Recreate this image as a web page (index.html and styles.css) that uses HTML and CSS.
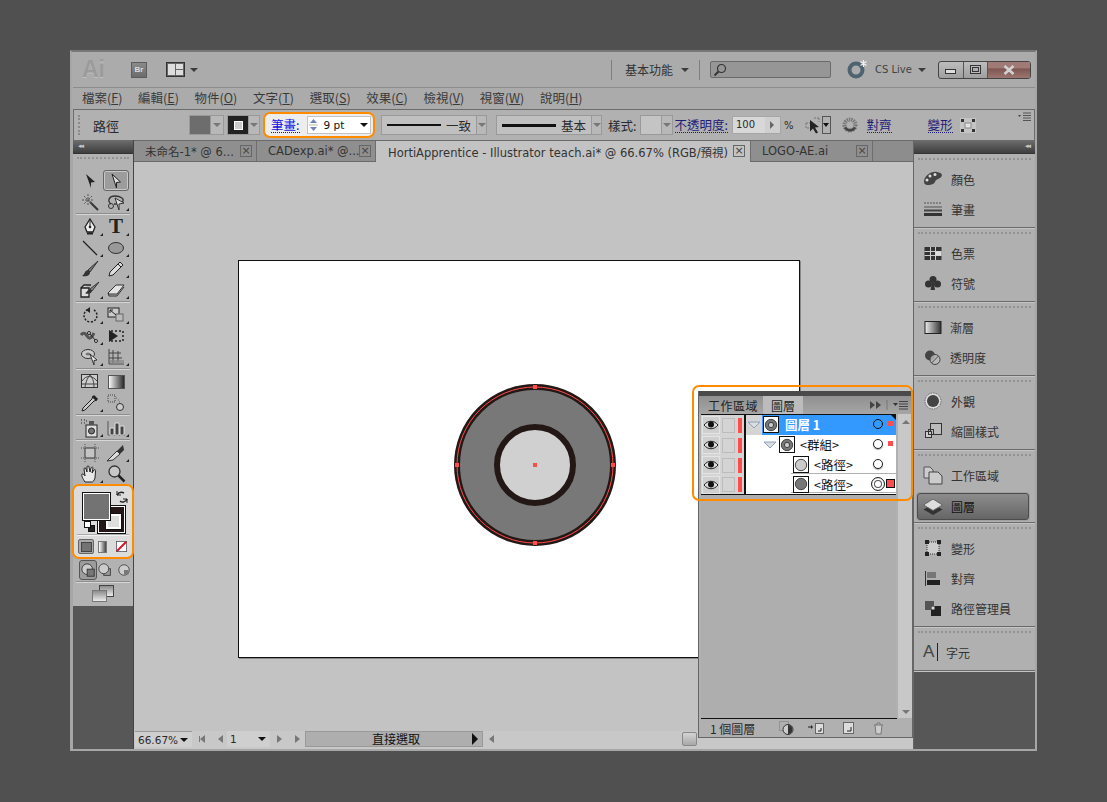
FILE: index.html
```html
<!DOCTYPE html>
<html lang="zh-Hant">
<head>
    <meta charset="UTF-8">
    <title>Adobe Illustrator</title>
    <link rel="stylesheet" href="styles.css">
</head>
<body>
<div class="window">
    <!-- Title bar -->
    <div class="titlebar">
        <span class="ai-logo">Ai</span>
        <span class="br-box">Br</span>
        <svg class="layout-icon" width="19" height="15" viewBox="0 0 19 15"><rect x=".5" y=".5" width="18" height="14" fill="#666" stroke="#333"/><rect x="2" y="2" width="7" height="11" fill="#ddd"/><rect x="10" y="2" width="7" height="5" fill="#ddd"/><rect x="10" y="8" width="7" height="5" fill="#ddd"/></svg>
        <span class="arrow-down dark layout-arrow"></span>
        <span class="bar-divider first"></span>
        <span class="workspace">基本功能</span>
        <span class="arrow-down dark workspace-arrow"></span>
        <span class="bar-divider second"></span>
        <span class="search">
            <svg width="14" height="14" viewBox="0 0 14 14" fill="none" stroke="#333" stroke-width="1.2"><circle cx="8.5" cy="5.5" r="4"/><path d="M5.5 8.5 1.5 12.5" stroke-width="1.8"/></svg>
        </span>
        <svg class="cs-icon" width="21" height="20" viewBox="0 0 21 20"><circle cx="9" cy="11" r="6.5" fill="none" stroke="#4d6470" stroke-width="4"/><path d="M16.5 1v7M13.5 2.5l6 4M19.5 2.5l-6 4" stroke="#f0f0f0" stroke-width="1.2"/></svg>
        <span class="cs-live">CS Live</span>
        <span class="arrow-down dark cs-arrow"></span>
        <div class="win-buttons">
            <span class="win-btn min"><i></i></span>
            <span class="win-btn max"><i></i></span>
            <span class="win-btn close">
                <svg width="12" height="10" viewBox="0 0 12 10"><path d="M1.5 1 10.5 9M10.5 1 1.5 9" stroke="#d2d2d2" stroke-width="2.6"/></svg>
            </span>
        </div>
    </div>

    <!-- Menu -->
    <nav class="menubar">
        <span>檔案(<u>F</u>)</span>
        <span>編輯(<u>E</u>)</span>
        <span>物件(<u>O</u>)</span>
        <span>文字(<u>T</u>)</span>
        <span>選取(<u>S</u>)</span>
        <span>效果(<u>C</u>)</span>
        <span>檢視(<u>V</u>)</span>
        <span>視窗(<u>W</u>)</span>
        <span>說明(<u>H</u>)</span>
    </nav>

    <!-- Control bar -->
    <div class="controlbar">
        <span class="grip-v"></span>
        <span class="path-label">路徑</span>
        <span class="swatch-combo fill-combo"><span class="swatch gray-swatch"></span><span class="combo-arrow"><i class="arrow-down"></i></span></span>
        <span class="swatch-combo stroke-combo"><span class="swatch black-swatch"><i></i></span><span class="combo-arrow"><i class="arrow-down"></i></span></span>
        <div class="stroke-highlight">
            <a class="link-blue">筆畫:</a>
            <span class="stroke-input">
                <span class="spinner">
                    <svg width="11" height="16" viewBox="0 0 11 16"><path d="M5.5 2 9 6H2z" fill="#6f83b8"/><path d="M2 10h7l-3.500 4z" fill="#6f83b8"/><path d="M1 8h9" stroke="#bbb"/></svg>
                </span>
                <span class="pt">9 pt</span>
                <i class="arrow-down black"></i>
            </span>
        </div>
        <span class="line-combo first-line"><span class="line thin"></span><span class="line-text">一致</span><span class="combo-arrow"><i class="arrow-down"></i></span></span>
        <span class="line-combo second-line"><span class="line thick"></span><span class="line-text">基本</span><span class="combo-arrow"><i class="arrow-down"></i></span></span>
        <span class="style-label">樣式:</span>
        <span class="style-combo"><span class="style-swatch"></span><span class="combo-arrow"><i class="arrow-down"></i></span></span>
        <a class="link-dark opacity-link">不透明度:</a>
        <span class="opacity-input"><span class="opacity-value">100</span><span class="opacity-step"><i class="arrow-right"></i></span></span>
        <span class="percent">%</span>
        <svg class="isolate-icon" width="17" height="18" viewBox="0 0 17 18"><path d="M1 7h4M9 2h5M1 7v5h4M14 2v4" stroke="#777" fill="none" stroke-dasharray="2 1"/><path d="M5 4l9 7-4 .5 3 5-2 1-3-5-3 3z" fill="#222"/></svg>
        <span class="isolate-arrow"><i class="arrow-down black"></i></span>
        <svg class="spinner-icon" width="16" height="16" viewBox="0 0 16 16"><circle cx="8" cy="8" r="5.500" fill="none" stroke="#777" stroke-width="4" stroke-dasharray="1.400 .8"/><path d="M2 11a7 7 0 0 0 12 0l-2-1a5 5 0 0 1-8 0z" fill="#444"/></svg>
        <a class="link-dark align-link">對齊</a>
        <a class="link-dark transform-link">變形</a>
        <svg class="transform-icon" width="16" height="15" viewBox="0 0 16 15"><rect width="16" height="15" fill="#c4c4c4"/><path d="M1 1h3v3H1zM12 1h3v3h-3zM1 11h3v3H1zM12 11h3v3h-3z" fill="#333"/><rect x="5" y="5" width="6" height="5" fill="#e2e2e2" stroke="#888"/></svg>
        <span class="panel-menu">
            <svg width="13" height="9" viewBox="0 0 13 9"><path d="M0 3h3L1.500 5z" fill="#444"/><path d="M5 1h8M5 3.500h8M5 6h8M5 8.500h8" stroke="#555"/></svg>
        </span>
    </div>

    <div class="main">
        <!-- Tools -->
        <aside class="tools">
            <div class="tools-panel">
            <div class="dark-head left-head"><span class="collapse">◂◂</span></div>
            <div class="grip-h"></div>
            <div class="tool-grid">
                <span class="tool"><svg width="16" height="16" viewBox="0 0 16 16"><path d="M4 1l9 8-4 .5 0 5.500z" fill="#222"/></svg></span>
                <span class="tool selected"><svg width="16" height="16" viewBox="0 0 16 16"><path d="M4 1l8.500 8-4 .5 0 5.500z" fill="#ddd" stroke="#222"/></svg></span>
                <span class="tool"><svg width="18" height="18" viewBox="0 0 18 18"><path d="M9 9l8 8" stroke="#333" stroke-width="2"/><path d="M7 1v11M1 7h12M3 3l8 8M11 3l-8 8" stroke="#555" stroke-dasharray="2 1"/></svg></span>
                <span class="tool more"><svg width="20" height="18" viewBox="0 0 20 18"><path d="M5 11C1 8 3 3 9 3s9 3 8 5-5 3-9 3" fill="none" stroke="#333" stroke-width="1.300"/><circle cx="5" cy="13" r="2.500" fill="none" stroke="#333"/><path d="M9 5l9 5-5 1v6z" fill="#ddd" stroke="#333"/></svg></span>
            </div>
            <div class="tool-sep"></div>
            <div class="tool-grid four">
                <span class="tool more"><svg width="16" height="18" viewBox="0 0 16 18"><path d="M8 1l5 8-2 5H5L3 9z" fill="#eee" stroke="#222" stroke-width="1.300"/><path d="M8 1v7" stroke="#222"/><circle cx="8" cy="9" r="1.300" fill="#222"/><path d="M5 15.500h6" stroke="#222" stroke-width="2"/></svg></span>
                <span class="tool more tool-t">T</span>
                <span class="tool more"><svg width="18" height="18" viewBox="0 0 18 18"><path d="M2 2l14 14" stroke="#222" stroke-width="1.300"/></svg></span>
                <span class="tool more"><svg width="18" height="16" viewBox="0 0 18 16"><ellipse cx="9" cy="8" rx="7.500" ry="5.500" fill="#999" stroke="#333"/></svg></span>
                <span class="tool"><svg width="18" height="18" viewBox="0 0 18 18"><path d="M17 1 7 10l2 2z" fill="#777" stroke="#333"/><path d="M7 10c-3 0-3 4-6 6 4 1 8 0 8-4z" fill="#333"/></svg></span>
                <span class="tool more"><svg width="18" height="18" viewBox="0 0 18 18"><path d="M13 2l3 3-10 10-4 1 1-4z" fill="#ddd" stroke="#222"/><path d="M11 4l3 3" stroke="#222"/></svg></span>
                <span class="tool more"><svg width="20" height="18" viewBox="0 0 20 18"><path d="M1 7h8v9H1z M1 7l3-3h7" fill="#ddd" stroke="#222" stroke-width="1.300"/><path d="M19 1 10 8l2 2z" fill="#888" stroke="#333"/><path d="M10 8c-3 0-2 3-5 4 3 2 7 0 7-2z" fill="#333"/></svg></span>
                <span class="tool more"><svg width="18" height="14" viewBox="0 0 18 14"><path d="M1 10 9 2h8l-7 9H2z" fill="#e4e4e4" stroke="#333"/><path d="M1 10l1 3h8l7-9" fill="none" stroke="#333"/></svg></span>
            </div>
            <div class="tool-sep"></div>
            <div class="tool-grid three">
                <span class="tool more"><svg width="18" height="18" viewBox="0 0 18 18"><path d="M13 4a6.500 6.500 0 1 1-7 0" fill="none" stroke="#222" stroke-width="1.500" stroke-dasharray="2 1.500"/><path d="M9 1 5 4l4 3z" fill="#222"/></svg></span>
                <span class="tool more"><svg width="18" height="18" viewBox="0 0 18 18"><rect x="1" y="2" width="11" height="9" fill="#ccc" stroke="#222"/><rect x="9" y="8" width="7" height="7" fill="#bbb" stroke="#666"/><path d="M3 4l6 5M3 4h3M3 4v3" stroke="#222" fill="none"/></svg></span>
                <span class="tool more"><svg width="20" height="18" viewBox="0 0 20 18"><path d="M1 8c4-5 6 2 8 3s4-3 5-5" fill="none" stroke="#555" stroke-width="3"/><path d="M9 6l8 9" stroke="#222"/><circle cx="9" cy="6" r="1.500" fill="#ddd" stroke="#222"/><circle cx="16" cy="14" r="1.500" fill="#ddd" stroke="#222"/></svg></span>
                <span class="tool"><svg width="18" height="16" viewBox="0 0 18 16"><rect x="4" y="3" width="12" height="10" fill="none" stroke="#222" stroke-width="1.500" stroke-dasharray="2 2"/><path d="M2 2l9 6-9 6z" fill="#222"/></svg></span>
                <span class="tool more"><svg width="20" height="18" viewBox="0 0 20 18"><ellipse cx="8" cy="6" rx="6.500" ry="4.500" fill="#ccc" stroke="#333"/><ellipse cx="8" cy="6" rx="2.500" ry="1.500" fill="#777"/><path d="M10 6l7 6-3 .5V17z" fill="#eee" stroke="#333"/></svg></span>
                <span class="tool more"><svg width="18" height="18" viewBox="0 0 18 18"><path d="M2 1v15h15M6 2v13M11 3v11M2 5h12M2 10h13" stroke="#444" fill="none"/><path d="M3 16h14v-4H3z" fill="#888" opacity=".7"/></svg></span>
            </div>
            <div class="tool-sep"></div>
            <div class="tool-grid two">
                <span class="tool"><svg width="18" height="15" viewBox="0 0 18 15"><rect x=".5" y=".5" width="16" height="13" fill="#ccc" stroke="#333"/><path d="M1 7c4-6 10-6 15 0M4 13c1-6 3-10 5-12M13 13c0-6-2-10-4-12M1 10h15" stroke="#444" fill="none"/></svg></span>
                <span class="tool"><svg width="17" height="14" viewBox="0 0 17 14"><defs><linearGradient id="gr1"><stop offset="0" stop-color="#fff"/><stop offset="1" stop-color="#222"/></linearGradient></defs><rect x=".5" y=".5" width="16" height="13" fill="url(#gr1)" stroke="#555"/></svg></span>
                <span class="tool more"><svg width="18" height="18" viewBox="0 0 18 18"><path d="M12 2l4 4-3 1-9 9-3 1 1-3 9-9z" fill="#ccc" stroke="#222"/><path d="M12 2l4 4" stroke="#222" stroke-width="3"/></svg></span>
                <span class="tool"><svg width="18" height="18" viewBox="0 0 18 18"><rect x="1" y="1" width="7" height="7" fill="none" stroke="#444" stroke-dasharray="1 1"/><circle cx="13" cy="13" r="3.500" fill="#ccc" stroke="#333"/><path d="M9 4h1M11 6h1M12 8h1" stroke="#666"/></svg></span>
            </div>
            <div class="tool-sep"></div>
            <div class="tool-grid one">
                <span class="tool more"><svg width="20" height="20" viewBox="0 0 20 20"><rect x="6" y="7" width="11" height="12" fill="#ddd" stroke="#222"/><circle cx="11.500" cy="13" r="3" fill="#777" stroke="#222"/><rect x="9" y="3" width="5" height="4" fill="#555"/><path d="M1 2h1M4 2h1M1 5h1M4 5h1M6 3h1" stroke="#222"/></svg></span>
                <span class="tool more"><svg width="19" height="16" viewBox="0 0 19 16"><path d="M1 15V1M1 15h17" stroke="#555"/><path d="M3 8h4v7H3zM8 3h4v12H8zM13 6h4v9h-4z" fill="#444" stroke="#ddd"/></svg></span>
            </div>
            <div class="tool-sep"></div>
            <div class="tool-grid two">
                <span class="tool"><svg width="20" height="20" viewBox="0 0 20 20"><rect x="5" y="5" width="10" height="10" fill="#c4c4c4" stroke="#333"/><path d="M5 1v3M15 1v3M5 16v3M15 16v3M1 5h3M1 15h3M16 5h3M16 15h3" stroke="#555" stroke-dasharray="1 1"/></svg></span>
                <span class="tool more"><svg width="20" height="18" viewBox="0 0 20 18"><path d="M1 17 11 7l3 3-7 6z" fill="#ddd" stroke="#333"/><path d="M11 7l6-6 1 5-4 4z" fill="#333"/></svg></span>
                <span class="tool more"><svg width="20" height="20" viewBox="0 0 20 20"><path d="M5 18C3 15 1 11 2 10s3 2 3 2L4 5c0-1.500 2-1.500 2 0l1 3 0-5c0-1.500 2-1.500 2 0l1 5 1-4c.5-1.500 2-1 2 0l-1 5 2-3c1-1 2 0 1.500 1L15 14c-1 3-2 4-3 4z" fill="#e8e8e8" stroke="#222"/></svg></span>
                <span class="tool"><svg width="19" height="19" viewBox="0 0 19 19"><circle cx="7.500" cy="7.500" r="5.500" fill="#c8c8c8" stroke="#333" stroke-width="1.300"/><path d="M11.500 11.500 17.500 17.500" stroke="#222" stroke-width="2.500"/></svg></span>
            </div>

            <div class="color-box">
                <div class="fill-stroke">
                    <span class="big-stroke"><i></i></span>
                    <span class="big-fill"></span>
                    <svg class="swap" width="14" height="14" viewBox="0 0 14 14" fill="none" stroke="#222" stroke-width="1.500"><path d="M2 5c2-3 5-3 7-2M12 9c-1 3-5 4-7 2"/><path d="M2 1v4h4M12 13V9H8" stroke-width="1"/></svg>
                    <span class="mini-fill"></span>
                    <span class="mini-stroke"><i></i></span>
                </div>
                <div class="color-sep"></div>
                <div class="color-modes">
                    <span class="mode active"><i></i></span>
                    <span class="mode grad"></span>
                    <svg class="mode-none" width="11" height="11" viewBox="0 0 14 14"><rect x=".5" y=".5" width="13" height="13" fill="#fff" stroke="#555"/><path d="M1 13 13 1" stroke="#d8142c" stroke-width="2.500"/></svg>
                </div>
            </div>
            <div class="draw-modes">
                <span class="draw-mode active"><svg width="15" height="15" viewBox="0 0 17 17"><circle cx="7" cy="7" r="6" fill="#ccc" stroke="#333"/><rect x="7" y="7" width="8" height="8" fill="#777" stroke="#333"/></svg></span>
                <span class="draw-mode"><svg width="14" height="14" viewBox="0 0 17 17"><rect x="7" y="7" width="8" height="8" fill="#999" stroke="#333"/><circle cx="7" cy="7" r="6" fill="#ccc" stroke="#333"/></svg></span>
                <span class="draw-mode last"><svg width="12" height="12" viewBox="0 0 16 16"><circle cx="8" cy="8" r="7" fill="#ccc" stroke="#333"/><rect x="8" y="8" width="6" height="6" fill="#777"/></svg></span>
            </div>
            <div class="tool-sep"></div>
            <div class="screen-mode">
                <svg width="22" height="17" viewBox="0 0 22 17"><defs><linearGradient id="gr2" x1="0" y1="0" x2="0" y2="1"><stop offset="0" stop-color="#888"/><stop offset="1" stop-color="#f0f0f0"/></linearGradient></defs><rect x="7.500" y=".5" width="14" height="11" fill="url(#gr2)" stroke="#444"/><rect x=".5" y="5.500" width="14" height="11" fill="url(#gr2)" stroke="#777"/></svg>
            </div>
            </div>
        </aside>

        <!-- Document area -->
        <section class="doc">
            <div class="tabs">
                <span class="tab tab-1"><b>未命名-1* @ 6...</b><i class="tab-x">×</i></span>
                <span class="tab tab-2"><b>CADexp.ai* @...</b><i class="tab-x">×</i></span>
                <span class="tab tab-active"><b>HortiApprentice - Illustrator teach.ai* @ 66.67% (RGB/預視)</b><i class="tab-x">×</i></span>
                <span class="tab tab-4"><b>LOGO-AE.ai</b><i class="tab-x">×</i></span>
            </div>
            <div class="canvas">
                <div class="artboard">
                    <svg class="art" width="170" height="170" viewBox="0 0 170 170">
                        <circle cx="85" cy="85" r="78" fill="#787878" stroke="#231815" stroke-width="6"/>
                        <circle cx="85" cy="85" r="38" fill="#d0d0d0" stroke="#231815" stroke-width="6"/>
                        <circle cx="85" cy="85" r="78" fill="none" stroke="#ff4d4d"/>
                        <rect x="83" y="5" width="4" height="4" fill="#ff4d4d"/>
                        <rect x="83" y="161" width="4" height="4" fill="#ff4d4d"/>
                        <rect x="5" y="83" width="4" height="4" fill="#ff4d4d"/>
                        <rect x="161" y="83" width="4" height="4" fill="#ff4d4d"/>
                        <rect x="83" y="83" width="4" height="4" fill="#ff4d4d"/>
                    </svg>
                </div>

                <!-- Floating layers panel -->
                <div class="layers-panel">
                    <div class="panel-top"></div>
                    <div class="panel-tabs">
                        <span class="ptab">工作區域</span>
                        <span class="ptab on">圖層</span>
                        <span class="ptab-tools">
                            <svg width="40" height="10" viewBox="0 0 40 10"><path d="M0 1l5 4-5 4zM6 1l5 4-5 4z" fill="#444"/><path d="M17 0v10" stroke="#777"/><path d="M23 3h5l-2.500 3z" fill="#333"/><path d="M29 1.500h9M29 4h9M29 6.500h9M29 9h9" stroke="#444"/></svg>
                        </span>
                    </div>
                    <div class="layer-list">
                        <div class="layer-rows">
                            <div class="layer-row top">
                                <div class="vis"><span class="eye"><svg width="16" height="12" viewBox="0 0 16 12"><path d="M1 6c4-5 10-5 14 0-4 5-10 5-14 0z" fill="#ddd" stroke="#222"/><circle cx="8" cy="5.500" r="3" fill="#111"/></svg></span><span class="lock"></span><span class="red-tag"></span></div>
                                <div class="twist"><svg width="14" height="8" viewBox="0 0 14 8"><path d="M1 1h12L7 7z" fill="#ddd" stroke="#8aa0c0"/></svg></div>
                                <div class="row-main selected">
                                    <span class="thumb"><svg width="16" height="16" viewBox="0 0 16 16"><circle cx="8" cy="8" r="6.500" fill="#777" stroke="#333"/><circle cx="8" cy="8" r="3" fill="#ccc" stroke="#333"/></svg></span>
                                    <span class="layer-name strong">圖層 1</span>
                                    <span class="target blue"></span>
                                    <span class="mark"></span>
                                </div>
                            </div>
                            <div class="layer-row">
                                <div class="vis"><span class="eye"><svg width="16" height="12" viewBox="0 0 16 12"><path d="M1 6c4-5 10-5 14 0-4 5-10 5-14 0z" fill="#ddd" stroke="#222"/><circle cx="8" cy="5.500" r="3" fill="#111"/></svg></span><span class="lock"></span><span class="red-tag"></span></div>
                                <div class="row-main level-1">
                                    <svg class="twist-in" width="14" height="8" viewBox="0 0 14 8"><path d="M1 1h12L7 7z" fill="#ddd" stroke="#8aa0c0"/></svg>
                                    <span class="thumb"><svg width="16" height="16" viewBox="0 0 16 16"><circle cx="8" cy="8" r="6.500" fill="#777" stroke="#333"/><circle cx="8" cy="8" r="3" fill="#ccc" stroke="#333"/></svg></span>
                                    <span class="layer-name">&lt;群組&gt;</span>
                                    <span class="target"></span>
                                    <span class="mark"></span>
                                </div>
                            </div>
                            <div class="layer-row">
                                <div class="vis"><span class="eye"><svg width="16" height="12" viewBox="0 0 16 12"><path d="M1 6c4-5 10-5 14 0-4 5-10 5-14 0z" fill="#ddd" stroke="#222"/><circle cx="8" cy="5.500" r="3" fill="#111"/></svg></span><span class="lock"></span><span class="red-tag"></span></div>
                                <div class="row-main level-2">
                                    <span class="thumb"><svg width="16" height="16" viewBox="0 0 16 16"><circle cx="8" cy="8" r="6.500" fill="#ccc" stroke="#333"/></svg></span>
                                    <span class="layer-name">&lt;路徑&gt;</span>
                                    <span class="target"></span>
                                    <span class="mark none"></span>
                                </div>
                            </div>
                            <div class="layer-row last">
                                <div class="vis"><span class="eye"><svg width="16" height="12" viewBox="0 0 16 12"><path d="M1 6c4-5 10-5 14 0-4 5-10 5-14 0z" fill="#ddd" stroke="#222"/><circle cx="8" cy="5.500" r="3" fill="#111"/></svg></span><span class="lock"></span><span class="red-tag"></span></div>
                                <div class="row-main level-2">
                                    <span class="thumb"><svg width="16" height="16" viewBox="0 0 16 16"><circle cx="8" cy="8" r="6.500" fill="#777" stroke="#333"/></svg></span>
                                    <span class="layer-name">&lt;路徑&gt;</span>
                                    <span class="target double"></span>
                                    <span class="mark big"></span>
                                </div>
                            </div>
                            <div class="layer-empty"></div>
                        </div>
                        <div class="layer-scroll">
                            <i class="scroll-up"></i>
                            <i class="scroll-down"></i>
                        </div>
                    </div>
                    <div class="layer-foot">
                        <span class="layer-count">1 個圖層</span>
                        <svg width="15" height="14" viewBox="0 0 15 14"><rect x=".5" y=".5" width="9" height="9" fill="none" stroke="#777" stroke-dasharray="1 1"/><circle cx="9" cy="8.500" r="5" fill="#ccc" stroke="#333"/><path d="M9 8.500V4a4.500 4.500 0 0 1 0 9z" fill="#333"/></svg>
                        <svg width="16" height="11" viewBox="0 0 16 11"><path d="M0 4h4" stroke="#222"/><path d="M3 2l2 2-2 2z" fill="#222"/><rect x="7.500" y=".5" width="8" height="10" fill="#ddd" stroke="#666"/><path d="M10 8h3V5" stroke="#222" fill="none"/></svg>
                        <svg class="foot-gap" width="11" height="12" viewBox="0 0 11 12"><rect x=".5" y=".5" width="10" height="11" fill="#ddd" stroke="#666"/><path d="M4 9h4V5" stroke="#222" fill="none"/></svg>
                        <svg class="foot-gap" width="11" height="13" viewBox="0 0 11 13"><path d="M1 3h9M2 3l1 9h5l1-9M4 3V1h3v2" fill="#ccc" stroke="#777"/></svg>
                    </div>
                </div>
                <div class="layers-highlight"></div>
            </div>
            <div class="statusbar">
                <span class="zoom-combo">66.67%<i class="arrow-down black"></i></span>
                <span class="nav-btns"><i class="first-page"></i><i class="prev-page"></i></span>
                <span class="page-combo">1<i class="arrow-down black"></i></span>
                <span class="nav-btns after"><i class="next-page"></i><i class="last-page"></i></span>
                <span class="status-text">直接選取<i class="arrow-right black"></i></span>
                <span class="h-scroll"><i class="prev-page"></i><span class="thumb-h"></span></span>
            </div>
        </section>

        <!-- Right dock -->
        <aside class="dock">
            <div class="dark-head right-head"><span class="collapse">◂◂</span></div>
            <div class="dock-group">
                <div class="dock-item"><svg width="20" height="16" viewBox="0 0 20 16"><path d="M1 11C1 5 8 0 14 1s6 4 3 6-4 1-5 4-11 5-11 0z" fill="#444"/><circle cx="7" cy="5" r="1.500" fill="#ddd"/><circle cx="12" cy="3.500" r="1.500" fill="#ddd"/><circle cx="4" cy="9" r="1.500" fill="#ddd"/></svg><span>顏色</span></div>
                <div class="dock-item"><svg width="18" height="14" viewBox="0 0 18 14"><path d="M0 1h18" stroke="#555" stroke-dasharray="2 1"/><path d="M0 5h18" stroke="#555"/><path d="M0 8.500h18" stroke="#444" stroke-width="2"/><path d="M0 12.500h18" stroke="#333" stroke-width="3"/></svg><span>筆畫</span></div>
            </div>
            <div class="dock-group">
                <div class="dock-item"><svg width="17" height="13" viewBox="0 0 17 13"><rect width="17" height="13" fill="#333"/><path d="M6 0v13M11 0v13M0 4.500h17M0 8.500h17" stroke="#ccc"/><rect x="11" y="4.500" width="6" height="4" fill="#ddd"/></svg><span>色票</span></div>
                <div class="dock-item"><svg width="16" height="16" viewBox="0 0 16 16"><circle cx="8" cy="4.500" r="3.500" fill="#333"/><circle cx="3.500" cy="9" r="3.500" fill="#333"/><circle cx="12.500" cy="9" r="3.500" fill="#333"/><path d="M7 8h2l1 7H5.500z" fill="#333"/></svg><span>符號</span></div>
            </div>
            <div class="dock-group">
                <div class="dock-item"><svg width="17" height="13" viewBox="0 0 17 13"><defs><linearGradient id="gr3"><stop offset="0" stop-color="#eee"/><stop offset="1" stop-color="#333"/></linearGradient></defs><rect x=".5" y=".5" width="16" height="12" fill="url(#gr3)" stroke="#222"/></svg><span class="tight">漸層</span></div>
                <div class="dock-item"><svg width="17" height="15" viewBox="0 0 17 15"><circle cx="5.500" cy="5.500" r="5" fill="#444"/><circle cx="10.500" cy="9.500" r="5" fill="#bbb" fill-opacity=".8" stroke="#444"/><path d="M7 13 14 6" stroke="#444"/></svg><span class="tight">透明度</span></div>
            </div>
            <div class="dock-group">
                <div class="dock-item"><svg width="18" height="18" viewBox="0 0 18 18"><circle cx="9" cy="9" r="8" fill="#ddd" stroke="#666" stroke-dasharray="1.500 1"/><circle cx="9" cy="9" r="6" fill="#444"/></svg><span>外觀</span></div>
                <div class="dock-item"><svg width="18" height="16" viewBox="0 0 18 16"><rect x="6.500" y=".5" width="11" height="11" fill="#bbb" stroke="#333"/><rect x="1.500" y="8.500" width="6" height="6" fill="#ccc" stroke="#333"/><rect x="4.500" y="6.500" width="5" height="5" fill="none" stroke="#333"/></svg><span>縮圖樣式</span></div>
            </div>
            <div class="dock-group">
                <div class="dock-item"><svg width="20" height="19" viewBox="0 0 20 19"><path d="M1 1h6l3 3v8H1z" fill="#ccc" stroke="#555"/><path d="M6 6h9l4 4v8H6z" fill="#ccc" stroke="#444"/></svg><span>工作區域</span></div>
                <div class="dock-item active"><svg width="19" height="16" viewBox="0 0 19 16"><path d="M9.500 5 19 10.500 9.500 16 0 10.500z" fill="#333"/><path d="M9.500 0 19 6 9.500 11.500 0 6z" fill="#ddd" stroke="#666"/></svg><span>圖層</span></div>
            </div>
            <div class="dock-group">
                <div class="dock-item"><svg width="16" height="16" viewBox="0 0 16 16"><rect x="2" y="2" width="12" height="12" fill="#ccc" stroke="#333" stroke-dasharray="1 1"/><path d="M0 0h4v4H0zM12 0h4v4h-4zM0 12h4v4H0zM12 12h4v4h-4z" fill="#222"/></svg><span>變形</span></div>
                <div class="dock-item"><svg width="16" height="15" viewBox="0 0 16 15"><path d="M.5 0v15" stroke="#333"/><rect x="2" y="1" width="9" height="6" fill="#777"/><rect x="2" y="9" width="13" height="5" fill="#222"/></svg><span>對齊</span></div>
                <div class="dock-item"><svg width="16" height="15" viewBox="0 0 16 15"><rect width="9" height="9" fill="#555"/><rect x="6" y="5" width="10" height="10" fill="#222"/><rect x="6.500" y="5.500" width="3" height="3" fill="#ddd"/></svg><span>路徑管理員</span></div>
            </div>
            <div class="dock-group">
                <div class="dock-item"><span class="char-a">A</span><span class="char-bar"></span><span>字元</span></div>
            </div>
            <div class="dock-rest"></div>
        </aside>
    </div>
</div>
</body>
</html>
```

FILE: styles.css
```css
:root {
    --panel: #b0b0b0;
    --canvas: #c3c3c3;
    --line: #7c7c7c;
    --orange: #ff8c00;
    --red: #ff4d4d;
}

* {
    box-sizing: border-box;
}

body {
    margin: 0;
    height: 802px;
    padding: 50px 0 0 70px;
    background-color: #505050;
    font-family: "Noto Sans CJK TC", "DejaVu Sans", sans-serif;
    font-size: 12px;
    color: #2a2a2a;
    overflow: hidden;
}

i {
    font-style: normal;
}

.window {
    width: 967px;
    height: 701px;
    background-color: #ababab;
    border: 2px solid #a6a6a6;
    border-top-color: #777;
    display: flex;
    flex-direction: column;
}

/* small triangles used all over */
.arrow-down {
    display: inline-block;
    width: 0;
    height: 0;
    border-left: 4px solid transparent;
    border-right: 4px solid transparent;
    border-top: 4px solid #777;
}

.arrow-down.dark {
    border-top-color: #3c3c3c;
}

.arrow-down.black {
    border-top-color: #111;
}

.arrow-right {
    display: inline-block;
    width: 0;
    height: 0;
    border-top: 4px solid transparent;
    border-bottom: 4px solid transparent;
    border-left: 4px solid #666;
}

.arrow-right.black {
    border-top-width: 6px;
    border-bottom-width: 6px;
    border-left: 6px solid #111;
}

/* title bar */
.titlebar {
    height: 35px;
    display: flex;
    align-items: center;
    flex-shrink: 0;
}

.ai-logo {
    margin-left: 10px;
    width: 22px;
    font-family: "Liberation Sans", sans-serif;
    font-weight: bold;
    font-size: 23px;
    color: #9b9b9b;
    text-shadow: 0 1px 0 #c0c0c0;
}

.br-box {
    margin-left: 27px;
    width: 16px;
    height: 16px;
    background: linear-gradient(#8a8a8a, #6c6c6c);
    border: 1px solid #5c5c5c;
    color: #ddd;
    font: bold 8px "Liberation Sans", sans-serif;
    line-height: 14px;
    text-align: center;
}

.layout-icon {
    margin-left: 19px;
}

.layout-arrow {
    margin-left: 5px;
}

.bar-divider {
    width: 1px;
    height: 20px;
    background-color: #7f7f7f;
}

.bar-divider.first {
    margin-left: 413px;
}

.bar-divider.second {
    margin-left: 10px;
}

.workspace {
    margin-left: 13px;
    font-size: 12px;
    color: #333;
    white-space: nowrap;
    flex-shrink: 0;
}

.workspace-arrow {
    margin-left: 8px;
}

.search {
    margin-left: 10px;
    width: 121px;
    height: 17px;
    background-color: #969696;
    border: 1px solid #6a6a6a;
    border-radius: 2px;
    padding-left: 2px;
    display: flex;
    align-items: center;
}

.cs-icon {
    margin-left: 16px;
    margin-top: -2px;
}

.cs-live {
    margin-left: 7px;
    font: 10px "DejaVu Sans", sans-serif;
    color: #444;
    white-space: nowrap;
}

.cs-arrow {
    margin-left: 6px;
}

.win-buttons {
    margin-left: 12px;
    width: 93px;
    height: 18px;
    border: 1px solid #444;
    border-radius: 3px;
    overflow: hidden;
    display: flex;
    flex-shrink: 0;
    background: linear-gradient(#bdbdbd, #9f9f9f);
}

.win-btn {
    height: 100%;
    display: flex;
    align-items: center;
    justify-content: center;
    border-right: 1px solid #555;
}

.win-btn.min {
    width: 25px;
}

.win-btn.min i {
    width: 11px;
    height: 5px;
    margin-top: 4px;
    border: 1px solid #333;
    background-color: #ddd;
}

.win-btn.max {
    width: 24px;
}

.win-btn.max i {
    width: 11px;
    height: 9px;
    border: 1px solid #333;
    box-shadow: inset 0 0 0 1px #bbb, inset 0 0 0 2px #333;
}

.win-btn.close {
    flex: 1;
    border-right: none;
    background: linear-gradient(#a07a76 0, #a07a76 40%, #7e5450 41%, #9c7672);
}

/* menu */
.menubar {
    height: 22px;
    margin-left: 1px;
    border-top: 1px solid #8c8c8c;
    padding: 0 0 3px 9px;
    display: flex;
    align-items: center;
    gap: 15.700px;
    flex-shrink: 0;
    font-size: 12.500px;
    color: #3a3a3a;
}

/* control bar */
.controlbar {
    height: 31px;
    margin-left: 1px;
    border: 1px solid #6c6c6c;
    border-bottom: none;
    background-color: #b1b1b1;
    display: flex;
    align-items: center;
    flex-shrink: 0;
    position: relative;
}

.grip-v {
    width: 3px;
    height: 20px;
    margin-left: 4px;
    border-left: 2px dotted #8a8a8a;
}

.path-label {
    margin-left: 12px;
    font-size: 13px;
}

.swatch-combo {
    display: flex;
    height: 20px;
    border: 1px solid #999;
}

.fill-combo {
    margin-left: 70px;
    width: 35px;
}

.stroke-combo {
    margin-left: 3px;
    width: 33px;
}

.swatch {
    width: 20px;
    height: 100%;
    display: flex;
    align-items: center;
    justify-content: center;
}

.gray-swatch {
    background-color: #6d6d6d;
}

.black-swatch {
    background-color: #222;
}

.black-swatch i {
    width: 9px;
    height: 9px;
    background-color: #ccc;
    border: 1px solid #fff;
}

.combo-arrow {
    flex: 1;
    display: flex;
    align-items: center;
    justify-content: center;
    background-color: #b8b8b8;
    border-left: 1px solid #999;
}

.stroke-highlight {
    margin-left: 3px;
    width: 112px;
    height: 26px;
    border: 2px solid var(--orange);
    border-radius: 7px;
    background-color: #ededed;
    display: flex;
    align-items: center;
    padding-left: 6px;
}

.link-blue {
    color: #1010e0;
    font-size: 12.500px;
    border-bottom: 1px dotted #1010e0;
    line-height: 14px;
}

.stroke-input {
    margin-left: 7px;
    width: 64px;
    height: 18px;
    background-color: #fff;
    border: 1px solid #c4c4c4;
    display: flex;
    align-items: center;
}

.spinner {
    display: flex;
}

.pt {
    margin-left: 5px;
    font: 10.500px "DejaVu Sans", sans-serif;
    color: #111;
    width: 36px;
}

.line-combo {
    height: 20px;
    display: flex;
    align-items: center;
    border: 1px solid #999;
    background-color: #c0c0c0;
}

.first-line {
    margin-left: 6px;
    width: 106px;
}

.second-line {
    margin-left: 9px;
    width: 106px;
}

.line {
    width: 54px;
    margin-left: 5px;
    background-color: #111;
}

.line.thin {
    height: 2px;
}

.line.thick {
    height: 3px;
}

.line-text {
    margin-left: 5px;
    width: 30px;
    font-size: 12.500px;
}

.combo-arrow,
.line-combo .combo-arrow {
    align-self: stretch;
}

.style-label {
    margin-left: 6px;
    font-size: 12.500px;
}

.style-combo {
    margin-left: 3px;
    width: 33px;
    height: 20px;
    display: flex;
    border: 1px solid #999;
}

.style-swatch {
    width: 20px;
    background-color: #c4c4c4;
}

.link-dark {
    color: #1c1c78;
    font-size: 12.500px;
    line-height: 14px;
    border-bottom: 1px dotted #1c1c78;
}

.opacity-link {
    margin-left: 2px;
}

.opacity-input {
    margin-left: 4px;
    width: 49px;
    height: 18px;
    display: flex;
    background-color: #cfcfcf;
    border: 1px solid #a6a6a6;
}

.opacity-value {
    width: 32px;
    padding-left: 3px;
    font: 10px/16px "DejaVu Sans", sans-serif;
    background-color: #d8d8d8;
}

.opacity-step {
    flex: 1;
    display: flex;
    align-items: center;
    justify-content: center;
}

.percent {
    margin-left: 3px;
    font: 10px "DejaVu Sans", sans-serif;
}

.isolate-icon {
    margin-left: 11px;
}

.isolate-arrow {
    width: 9px;
    height: 18px;
    border: 1px solid #555;
    display: flex;
    align-items: center;
    justify-content: center;
}

.isolate-arrow .arrow-down {
    border-left-width: 3px;
    border-right-width: 3px;
    flex-shrink: 0;
}

.spinner-icon {
    margin-left: 11px;
}

.align-link {
    margin-left: 9px;
}

.transform-link {
    margin-left: 36px;
}

.transform-icon {
    margin-left: 7px;
}

.panel-menu {
    position: absolute;
    right: 3px;
    top: 2px;
    display: flex;
}

/* main area */
.main {
    flex: 1;
    display: flex;
    min-height: 0;
}

.dark-head {
    height: 14px;
    background: linear-gradient(#6e6e6e, #3e3e3e);
    border-bottom: 1px solid #333;
    color: #c8c8c8;
    font: 7px/12px "DejaVu Sans", sans-serif;
    letter-spacing: -1px;
    padding: 0 5px;
}

.right-head {
    text-align: right;
}

/* tools */
.tools {
    width: 62px;
    flex-shrink: 0;
    background-color: #575757;
    border-left: 1px solid #a6a6a6;
    border-right: 1px solid #444;
}

.tools-panel {
    height: 466px;
    background-color: #b2b2b2;
}

.grip-h {
    height: 3px;
    margin: 3px 4px 10px;
    border-top: 2px dotted #939393;
}

.tool-grid {
    padding-left: 4px;
    display: grid;
    grid-template-columns: 26px 26px;
    grid-auto-rows: 21px;
}

.tool {
    position: relative;
    display: flex;
    align-items: center;
    justify-content: center;
}

.tool.more::after {
    content: "";
    position: absolute;
    right: 0;
    bottom: 1px;
    border-left: 3px solid transparent;
    border-bottom: 3px solid #222;
}

.tool.selected {
    background-color: #9c9c9c;
    border: 1px solid #666;
    border-radius: 3px;
    box-shadow: inset 0 0 0 1px #c8c8c8;
}

.tool-t {
    font: bold 21px "Liberation Serif", serif;
    color: #222;
}

.tool-sep {
    height: 1px;
    margin: 1px 3px 1px;
    background-color: #d6d6d6;
    border-top: 1px solid #8e8e8e;
    box-sizing: content-box;
}

/* fill / stroke box */
.color-box {
    width: 62px;
    height: 75px;
    margin: 0 0 0 -1px;
    background-color: #dcdcdc;
    border: 2px solid var(--orange);
    border-radius: 7px;
    padding: 6px 0 0;
    position: relative;
}

.fill-stroke {
    height: 42px;
    position: relative;
}

.big-fill {
    position: absolute;
    left: 8px;
    top: 0;
    width: 29px;
    height: 29px;
    background-color: #737373;
    border: 1px solid #111;
    box-shadow: inset 0 0 0 1px #fff;
}

.big-stroke {
    position: absolute;
    left: 23px;
    top: 13px;
    width: 29px;
    height: 29px;
    background-color: #231815;
    border: 1px solid #111;
    box-shadow: inset 0 0 0 1px #fff;
    display: flex;
    align-items: center;
    justify-content: center;
}

.big-stroke i {
    width: 15px;
    height: 15px;
    margin: 3px 0 0 3px;
    background-color: #ddd;
    border: 2px solid #fff;
    box-shadow: 0 0 0 1px #111;
}

.swap {
    position: absolute;
    left: 41px;
    top: -2px;
}

.mini-fill,
.mini-stroke {
    position: absolute;
    width: 7px;
    height: 7px;
    border: 1px solid #111;
}

.mini-stroke {
    left: 14px;
    top: 33px;
    background-color: #222;
}

.mini-fill {
    left: 10px;
    top: 29px;
    background-color: #fff;
    z-index: 1;
}

.color-sep {
    height: 1px;
    margin: 0 3px 2px;
    background-color: #f2f2f2;
    border-top: 1px solid #aaa;
    box-sizing: content-box;
}

.color-modes {
    display: flex;
    align-items: center;
    padding: 1px 0 0 4px;
}

.mode.active {
    width: 16px;
    height: 15px;
    display: flex;
    align-items: center;
    justify-content: center;
    background-color: #aaa;
    border: 1px solid #666;
    border-radius: 2px;
}

.mode.active i {
    width: 11px;
    height: 10px;
    background-color: #737373;
    border: 1px solid #444;
}

.mode.grad {
    margin-left: 4px;
    width: 9px;
    height: 12px;
    border: 1px solid #777;
    background: linear-gradient(to right, #fff, #444);
}

.mode-none {
    margin-left: 9px;
}

.draw-modes {
    display: flex;
    align-items: center;
    padding: 1px 0 0 6px;
    gap: 0;
}

.draw-mode {
    width: 16px;
    height: 20px;
    display: flex;
    align-items: center;
    justify-content: center;
}

.draw-mode.active {
    width: 18px;
    background-color: #9c9c9c;
    border: 1px solid #555;
    border-radius: 3px;
}

.draw-mode.last {
    margin-left: 3px;
}

.screen-mode {
    display: flex;
    justify-content: center;
    padding: 1px 0 0;
}

/* document column */
.doc {
    width: 779px;
    flex-shrink: 0;
    display: flex;
    flex-direction: column;
    background-color: var(--canvas);
}

.tabs {
    height: 22px;
    display: flex;
    background-color: #8d8d8d;
    border-top: 1px solid #6a6a6a;
    border-bottom: 1px solid #6a6a6a;
    flex-shrink: 0;
}

.tab {
    display: flex;
    align-items: center;
    padding-left: 11px;
    position: relative;
    background-color: #8f8f8f;
    border-right: 1px solid #6e6e6e;
    color: #333;
    font: 11.500px "DejaVu Sans", "Noto Sans CJK TC", sans-serif;
    white-space: nowrap;
}

.tab b {
    font-weight: normal;
}

.tab-1 {
    width: 123px;
}

.tab-2 {
    width: 119px;
}

.tab-active {
    width: 375px;
    background-color: var(--canvas);
    padding-left: 12px;
    margin-bottom: -1px;
}

.tab-4 {
    width: 122px;
}

.tab-x {
    position: absolute;
    right: 4px;
    top: 4px;
    width: 12px;
    height: 12px;
    border: 1px solid #666;
    font: 11px/9px "DejaVu Sans", sans-serif;
    text-align: center;
    color: #444;
}

.tab-active .tab-x {
    right: 5px;
}

.canvas {
    flex: 1;
    position: relative;
    min-height: 0;
    padding: 98px 0 0 104px;
}

.artboard {
    width: 562px;
    height: 398px;
    background-color: #fff;
    border: 1px solid #111;
    box-shadow: 1px 1px 0 #888;
    padding: 119px 0 0 211px;
}

.art {
    display: block;
}

/* layers panel */
.layers-panel {
    position: absolute;
    z-index: 2;
    left: 564px;
    top: 229px;
    width: 215px;
    height: 347px;
    background-color: var(--panel);
    border: 1px solid #666;
    border-top: none;
    display: flex;
    flex-direction: column;
}

.panel-top {
    height: 5px;
    background-color: #4a4a4a;
}

.panel-tabs {
    height: 18px;
    background: linear-gradient(#909090, #a6a6a6);
    display: flex;
    align-items: stretch;
    font-size: 12px;
}

.ptab {
    padding: 0 5px 0 9px;
    display: flex;
    align-items: center;
    color: #222;
    letter-spacing: .5px;
}

.ptab.on {
    padding: 0 8px;
    background-color: #bcbcbc;
    letter-spacing: 0;
}

.ptab-tools {
    margin-left: auto;
    margin-right: 2px;
    display: flex;
    align-items: center;
}

.layer-list {
    flex: 1;
    display: flex;
    min-height: 0;
}

.layer-rows {
    width: 195px;
    margin: 0 2px;
    display: flex;
    flex-direction: column;
    border-top: 1px solid #111;
}

.layer-row {
    height: 20px;
    display: flex;
    flex-shrink: 0;
    background-color: #fff;
}

.layer-row.last {
    border-bottom: 1px solid #111;
}

.vis {
    width: 45px;
    flex-shrink: 0;
    display: flex;
    align-items: center;
    gap: 1px;
    background-color: #d4d4d4;
    border-right: 2px solid #111;
    padding: 1px 0 1px 1px;
}

.eye {
    width: 18px;
    height: 18px;
    display: flex;
    align-items: center;
    justify-content: center;
    background-color: #cfcfcf;
    border: 1px solid #e4e4e4;
}

.lock {
    width: 13px;
    height: 15px;
    margin-left: 1px;
    border: 1px solid #bcbcbc;
}

.red-tag {
    width: 4px;
    height: 15px;
    margin-left: 2px;
    background-color: var(--red);
}

.twist {
    width: 16px;
    flex-shrink: 0;
    display: flex;
    align-items: center;
    justify-content: center;
    background-color: #d4d4d4;
}

.row-main {
    flex: 1;
    display: flex;
    align-items: center;
    position: relative;
    border-bottom: 1px solid #b0b0b0;
    background-color: #fff;
}

.row-main.selected {
    background-color: #3399ff;
    border-bottom-color: #3399ff;
    color: #fff;
}

.row-main.selected::after {
    content: "";
    position: absolute;
    right: 0;
    top: 0;
    border-top: 5px solid #111;
    border-left: 5px solid transparent;
}

.level-1 {
    margin-left: 0;
    padding-left: 18px;
}

.level-2 {
    margin-left: 0;
    padding-left: 47px;
}

.layer-row:not(.top) .level-1 {
    border-bottom-color: transparent;
    box-shadow: inset 0 -1px 0 #fff;
    background: linear-gradient(to right, #fff 30px, #b0b0b0 30px) bottom / 100% 1px no-repeat, #fff;
}

.level-2 {
    background: linear-gradient(to right, #fff 45px, #b0b0b0 45px) bottom / 100% 1px no-repeat, #fff;
    border-bottom-color: transparent;
}

.twist-in {
    margin-right: 2px;
    margin-left: -1px;
    position: absolute;
    left: 18px;
}

.level-1 .thumb {
    margin-left: 15px;
}

.thumb {
    width: 16px;
    height: 17px;
    background-color: #fff;
    border: 1px solid #111;
    display: flex;
    align-items: center;
    justify-content: center;
    flex-shrink: 0;
}

.thumb svg {
    width: 14px;
    height: 14px;
}

.selected .thumb {
    margin-left: 1px;
}

.layer-name {
    margin-left: 5px;
    font-size: 12.500px;
    color: #111;
}

.layer-name.strong {
    margin-left: 6px;
    font-weight: bold;
    color: #fff;
}

.target {
    position: absolute;
    right: 13px;
    top: 4px;
    width: 10px;
    height: 10px;
    border-radius: 50%;
    background-color: #fff;
    border: 1px solid #222;
    box-shadow: 0 1px 1px #aaa;
}

.target.blue {
    background-color: #3399ff;
    border-color: #111;
    box-shadow: none;
}

.target.double {
    right: 11px;
    top: 2px;
    width: 14px;
    height: 14px;
    box-shadow: inset 0 0 0 2px #fff, inset 0 0 0 3px #555;
}

.mark {
    position: absolute;
    right: 3px;
    top: 6px;
    width: 5px;
    height: 5px;
    background-color: var(--red);
}

.mark.none {
    display: none;
}

.mark.big {
    top: 4px;
    right: 1px;
    width: 7px;
    height: 7px;
    box-sizing: content-box;
    border: 1px solid #111;
}

.layer-empty {
    flex: 1;
    background-color: #aeaeae;
}

.layer-scroll {
    flex: 1;
    background-color: #c8c8c8;
    position: relative;
}

.scroll-up,
.scroll-down {
    position: absolute;
    left: 4px;
    border-left: 4px solid transparent;
    border-right: 4px solid transparent;
}

.scroll-up {
    top: 6px;
    border-bottom: 4px solid #777;
}

.scroll-down {
    bottom: 4px;
    border-top: 4px solid #777;
}

.layer-foot {
    height: 19px;
    margin-right: 15px;
    margin-left: 2px;
    border-top: 1px solid #111;
    display: flex;
    align-items: center;
    flex-shrink: 0;
    padding-left: 9px;
    gap: 14px;
}

.foot-gap {
    margin-left: 5px;
}

.layer-count {
    width: 55px;
    font-size: 12px;
}

.layers-highlight {
    position: absolute;
    z-index: 3;
    left: 558px;
    top: 223px;
    width: 221px;
    height: 116px;
    border: 2px solid var(--orange);
    border-radius: 7px;
    pointer-events: none;
}

/* status bar */
.statusbar {
    height: 18px;
    display: flex;
    align-items: center;
    flex-shrink: 0;
    font: 10.500px "DejaVu Sans", "Noto Sans CJK TC", sans-serif;
    background-color: #c8c8c8;
    border-bottom: 2px solid #c8c8c8;
}

.zoom-combo,
.page-combo {
    height: 16px;
    background-color: #cfcfcf;
    display: flex;
    align-items: center;
    justify-content: space-between;
    padding: 0 4px 0 3px;
}

.zoom-combo {
    width: 57px;
    margin-left: 1px;
    border-top: 1px solid #999;
}

.page-combo {
    width: 43px;
}

.nav-btns {
    width: 35px;
    display: flex;
    align-items: center;
    gap: 13px;
    padding-left: 8px;
}

.nav-btns.after {
    padding-left: 7px;
}

.nav-btns i {
    width: 0;
    height: 0;
    border-top: 4px solid transparent;
    border-bottom: 4px solid transparent;
}

.first-page,
.prev-page {
    border-right: 5px solid #777;
}

.next-page,
.last-page {
    border-left: 5px solid #777;
}

.first-page {
    box-shadow: -2px 0 0 -1px #777;
}

.status-text {
    width: 178px;
    height: 16px;
    background-color: #aeaeae;
    border: 1px solid #999;
    font: 12px/14px "Noto Sans CJK TC", sans-serif;
    color: #111;
    display: flex;
    align-items: center;
    justify-content: center;
    position: relative;
    padding-left: 4px;
}

.status-text .arrow-right {
    position: absolute;
    right: 4px;
    top: 1px;
}

.h-scroll {
    flex: 1;
    height: 16px;
    display: flex;
    align-items: center;
    padding-left: 6px;
    position: relative;
}

.h-scroll i {
    width: 0;
    height: 0;
    border-top: 4px solid transparent;
    border-bottom: 4px solid transparent;
}

.thumb-h {
    position: absolute;
    left: 199px;
    top: 1px;
    width: 15px;
    height: 14px;
    border: 1px solid #888;
    border-radius: 2px;
    background: linear-gradient(#d4d4d4, #a8a8a8);
}

/* right dock */
.dock {
    width: 122px;
    flex-shrink: 0;
    display: flex;
    flex-direction: column;
    background-color: var(--panel);
    border-left: 1px solid #666;
}

.dock-group {
    padding-top: 11px;
    padding-bottom: 2px;
    border-bottom: 1px solid #6a6a6a;
    box-shadow: 0 1px 0 #c4c4c4;
    position: relative;
}

.dock-group::before {
    content: "";
    position: absolute;
    left: 4px;
    right: 4px;
    top: 4px;
    border-top: 2px dotted #939393;
}

.dock-item {
    height: 30px;
    padding: 0 0 2px 9px;
    display: flex;
    align-items: center;
    gap: 8px;
    font-size: 12px;
    color: #333;
}

.dock-item svg {
    width: 20px;
    flex-shrink: 0;
}

.dock-item .tight {
    margin-left: -1px;
}

.dock-item.active {
    margin: 2px 6px 0 3px;
    padding: 0 0 0 5px;
    height: 27px;
    border: 1px solid #4c4c4c;
    border-radius: 3px;
    background: linear-gradient(#8c8c8c, #666);
    box-shadow: 0 0 0 1px #a0a0a0;
    color: #111;
}

.char-a {
    font: 17px "Liberation Sans", sans-serif;
    color: #444;
    width: 14px;
}

.char-bar {
    width: 1px;
    height: 18px;
    margin-left: -8px;
    background-color: #222;
}

.dock-rest {
    flex: 1;
    background-color: #575757;
}
```
